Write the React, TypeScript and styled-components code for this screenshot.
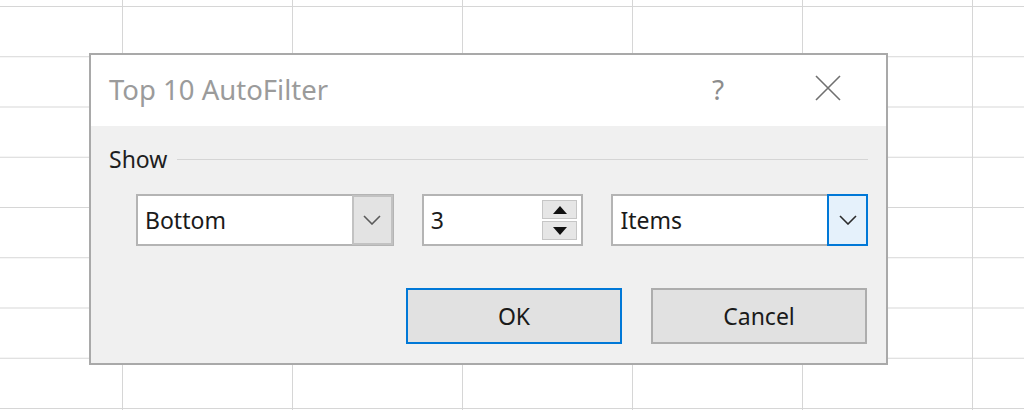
import * as React from 'react';
import styled, { createGlobalStyle } from 'styled-components';

const GlobalStyle = createGlobalStyle`
  html, body {
    margin: 0;
    padding: 0;
    background: #ffffff;
  }
  body {
    font-family: 'Noto Sans', 'Open Sans', 'Liberation Sans', sans-serif;
  }
`;

// spreadsheet cells behind the dialog
const Sheet = styled.div`
  position: relative;
  width: 1024px;
  height: 410px;
  overflow: hidden;
  background-color: #ffffff;
  background-image:
    linear-gradient(to right, #d6d6d6 0, #d6d6d6 1px, transparent 1px),
    linear-gradient(to bottom, #d6d6d6 0, #d6d6d6 1px, transparent 1px);
  background-size: 170px 100%, 100% 50.25px;
  background-position: 122px 0, 0 6px;
`;

const Dialog = styled.div`
  position: absolute;
  left: 89px;
  top: 53px;
  width: 799px;
  height: 312px;
  box-sizing: border-box;
  border: 2px solid #a9a9a9;
  display: flex;
  flex-direction: column;
  background: #f0f0f0;
`;

const TitleBar = styled.div`
  height: 71px;
  background: #ffffff;
  display: flex;
  align-items: center;
  padding: 0 0 0 18px;
`;

const Title = styled.div`
  flex: 1;
  font-size: 27.5px;
  color: #9b9b9b;
  margin-top: -3px;
`;

const HelpGlyph = styled.div`
  width: 24px;
  font-size: 28px;
  color: #8c8c8c;
  text-align: center;
  margin-right: 85px;
  margin-top: -4px;
`;

const CloseBox = styled.div`
  width: 26px;
  height: 26px;
  margin-right: 45px;
  margin-top: -5px;
`;

const Body = styled.div`
  flex: 1;
  padding: 19px 18px 19px 18px;
  display: flex;
  flex-direction: column;
`;

const GroupHeader = styled.div`
  height: 28px;
  display: flex;
  align-items: center;
  gap: 10px;
  font-size: 23px;
  color: #1e1e1e;
`;

const GroupRule = styled.div`
  flex: 1;
  height: 1px;
  background: #d5d5d5;
`;

const ControlsRow = styled.div`
  margin-top: 21px;
  padding-left: 27px;
  display: flex;
  gap: 28px;
  height: 52px;
`;

const Field = styled.div<{ $w: number }>`
  width: ${p => p.$w}px;
  height: 52px;
  box-sizing: border-box;
  border: 2px solid #b4b4b4;
  background: #ffffff;
  display: flex;
  align-items: stretch;
`;

const FieldText = styled.div`
  flex: 1;
  display: flex;
  align-items: center;
  padding-left: 7px;
  font-size: 23px;
  color: #1a1a1a;
`;

const DropButton = styled.div<{ $focus?: boolean }>`
  width: 41px;
  box-sizing: border-box;
  display: flex;
  align-items: center;
  justify-content: center;
  background: ${p => (p.$focus ? '#e5f1fb' : '#e3e3e3')};
  border: 2px solid ${p => (p.$focus ? '#0078d7' : '#c2c2c2')};
  margin: ${p => (p.$focus ? '-2px -2px -2px 0' : '-1px -1px -1px 0')};
`;

const SpinColumn = styled.div`
  width: 35px;
  display: flex;
  flex-direction: column;
  gap: 2px;
  padding: 4px 4px 4px 0;
`;

const SpinButton = styled.div`
  flex: 1;
  box-sizing: border-box;
  border: 1px solid #c6c6c6;
  background: #e6e6e6;
  display: flex;
  align-items: center;
  justify-content: center;
`;

const ButtonsRow = styled.div`
  margin-top: 42px;
  display: flex;
  justify-content: flex-end;
  gap: 29px;
  padding-right: 1px;
`;

const Button = styled.div<{ $default?: boolean }>`
  width: 216px;
  height: 56px;
  box-sizing: border-box;
  border: 2px solid ${p => (p.$default ? '#0078d7' : '#adadad')};
  background: #e1e1e1;
  display: flex;
  align-items: center;
  justify-content: center;
  font-size: 23px;
  color: #1a1a1a;
`;

const Chevron = ({ color }: { color: string }) => (
  <svg width="18" height="10" viewBox="0 0 18 10">
    <path d="M1 1 L9 9 L17 1" fill="none" stroke={color} strokeWidth="1.6" />
  </svg>
);

const Triangle = ({ up }: { up?: boolean }) => (
  <svg width="14" height="8" viewBox="0 0 14 8">
    <path d={up ? 'M0 8 L7 0 L14 8 Z' : 'M0 0 L7 8 L14 0 Z'} fill="#111" />
  </svg>
);

export default function App() {
  return (
    <Sheet>
      <GlobalStyle />
      <Dialog>
        <TitleBar>
          <Title>Top 10 AutoFilter</Title>
          <HelpGlyph>?</HelpGlyph>
          <CloseBox>
            <svg width="26" height="26" viewBox="0 0 26 26">
              <path d="M1 1 L25 25 M25 1 L1 25" stroke="#707070" strokeWidth="1.6" />
            </svg>
          </CloseBox>
        </TitleBar>
        <Body>
          <GroupHeader>
            <span>Show</span>
            <GroupRule />
          </GroupHeader>
          <ControlsRow>
            <Field $w={258}>
              <FieldText>Bottom</FieldText>
              <DropButton>
                <Chevron color="#5a5a5a" />
              </DropButton>
            </Field>
            <Field $w={162}>
              <FieldText>3</FieldText>
              <SpinColumn>
                <SpinButton>
                  <Triangle up />
                </SpinButton>
                <SpinButton>
                  <Triangle />
                </SpinButton>
              </SpinColumn>
            </Field>
            <Field $w={257}>
              <FieldText>Items</FieldText>
              <DropButton $focus>
                <Chevron color="#2b2b2b" />
              </DropButton>
            </Field>
          </ControlsRow>
          <ButtonsRow>
            <Button $default>OK</Button>
            <Button>Cancel</Button>
          </ButtonsRow>
        </Body>
      </Dialog>
    </Sheet>
  );
}
